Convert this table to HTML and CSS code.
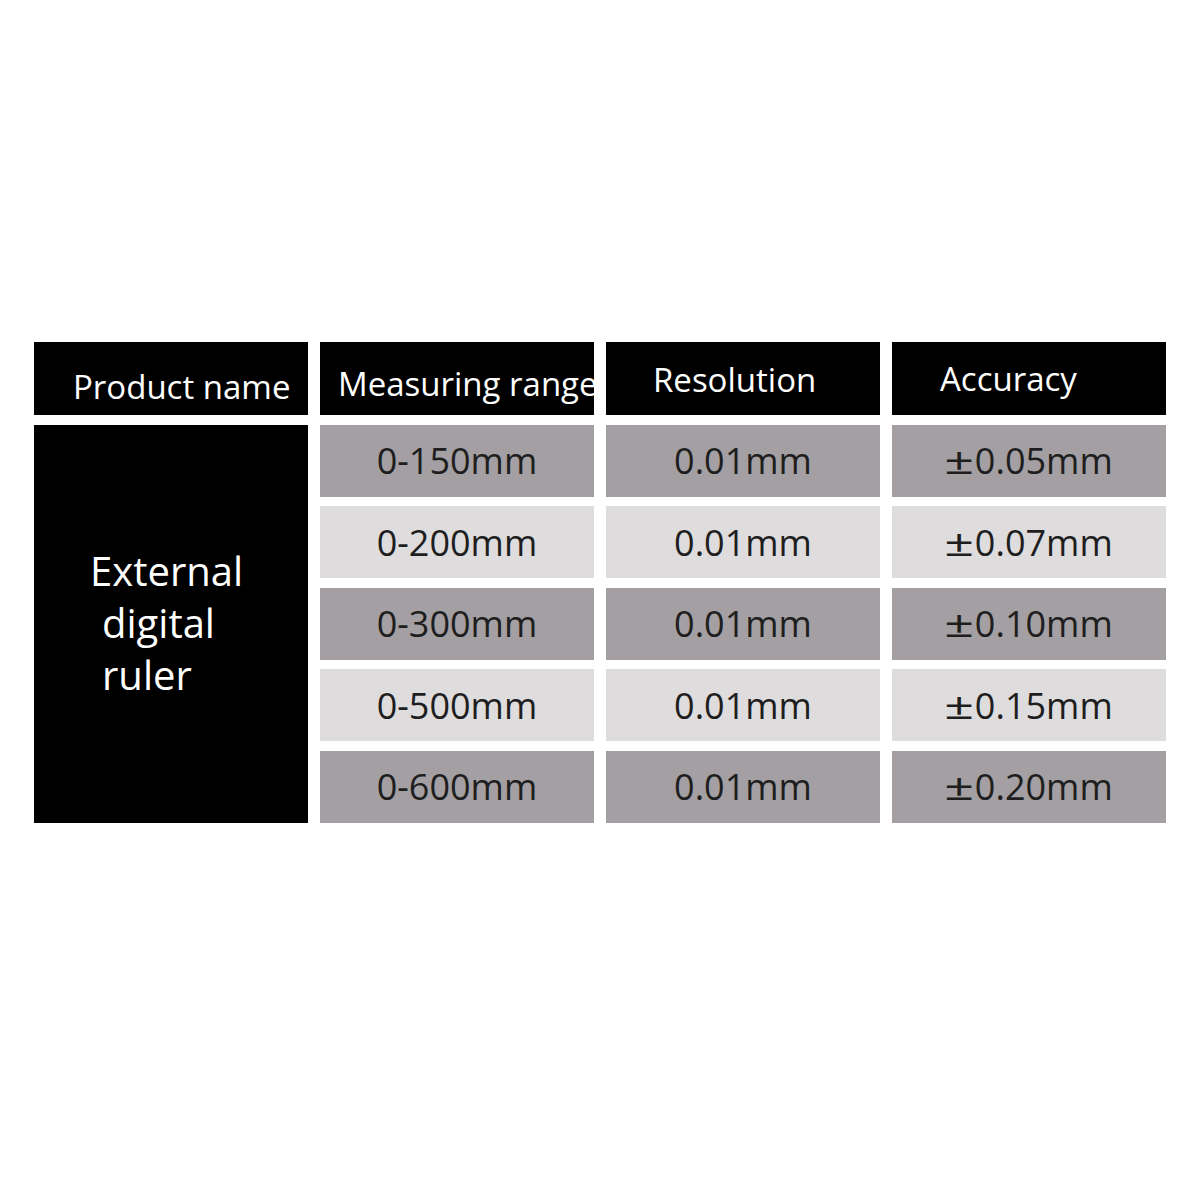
FILE: index.html
```html
<!DOCTYPE html>
<html>
<head>
<meta charset="utf-8">
<link rel="stylesheet" href="styles.css">
</head>
<body>
<div class="table">
  <div class="cell head h1">Product name</div>
  <div class="cell head h2">Measuring range</div>
  <div class="cell head h3">Resolution</div>
  <div class="cell head h4">Accuracy</div>

  <div class="cell name"><div class="name-text">External<br>digital<br>ruler</div></div>

  <div class="cell dark">0-150mm</div>
  <div class="cell dark">0.01mm</div>
  <div class="cell dark"><span class="pm">±</span>0.05mm</div>

  <div class="cell light">0-200mm</div>
  <div class="cell light">0.01mm</div>
  <div class="cell light"><span class="pm">±</span>0.07mm</div>

  <div class="cell dark">0-300mm</div>
  <div class="cell dark">0.01mm</div>
  <div class="cell dark"><span class="pm">±</span>0.10mm</div>

  <div class="cell light">0-500mm</div>
  <div class="cell light">0.01mm</div>
  <div class="cell light"><span class="pm">±</span>0.15mm</div>

  <div class="cell dark">0-600mm</div>
  <div class="cell dark">0.01mm</div>
  <div class="cell dark"><span class="pm">±</span>0.20mm</div>
</div>
</body>
</html>
```
FILE: styles.css
```css
html, body {
  margin: 0;
  padding: 0;
  background: #ffffff;
}
body {
  font-family: "Open Sans", "Noto Sans", sans-serif;
  width: 1200px;
  height: 1200px;
}
.table {
  display: grid;
  grid-template-columns: repeat(4, 274px);
  grid-template-rows: 73px repeat(5, 72px);
  column-gap: 12px;
  row-gap: 9.5px;
  padding-top: 342px;
  padding-left: 34px;
}
.cell {
  display: flex;
  align-items: center;
  justify-content: center;
  font-size: 36px;
  color: #1e1e1e;
  overflow: hidden;
  white-space: nowrap;
  box-sizing: border-box;
}
.head {
  background: #000000;
  color: #ffffff;
  font-size: 33px;
  justify-content: flex-start;
}
.h1 { padding-left: 39px; padding-top: 16px; }
.h2 { padding-left: 18px; padding-top: 10px; }
.h3 { padding-left: 47px; padding-top: 2px; }
.h4 { padding-left: 48px; padding-top: 0px; }
.name {
  grid-column: 1;
  grid-row: 2 / span 5;
  background: #000000;
  color: #ffffff;
  justify-content: flex-start;
  padding-left: 68px;
  padding-bottom: 2px;
  white-space: normal;
}
.name-text {
  font-size: 40px;
  line-height: 52px;
  text-indent: -12px;
}
.pm {
  display: inline-block;
  transform: scaleX(1.45);
  margin: 0 5px 0 4px;
}
.dark { background: #a39fa2; }
.light { background: #dfdcde; }
```
